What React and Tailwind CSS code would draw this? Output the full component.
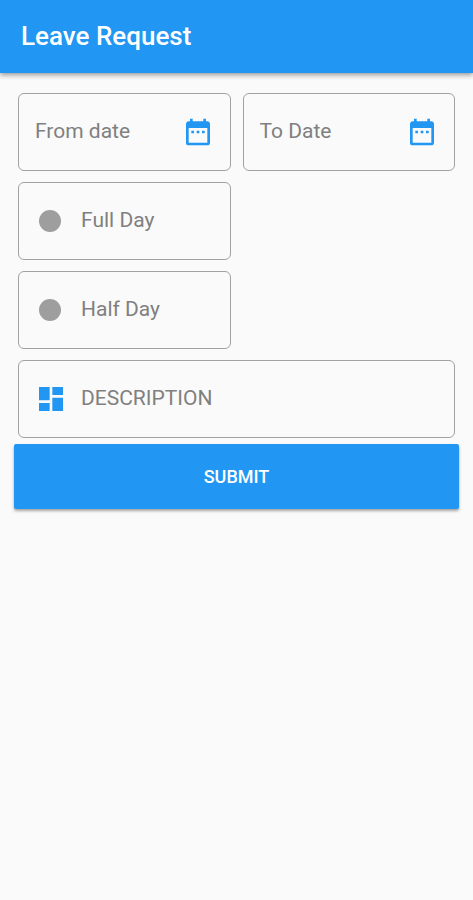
import React, { useState } from 'react';
import { MdDashboard, MdDateRange } from 'react-icons/md';

const boxClass =
  'flex items-center h-[78px] min-w-0 border border-[#a2a2a2] rounded-md focus-within:border-[#2196f3]';

const inputClass =
  'w-full min-w-0 bg-transparent text-[21px] text-[#444444] placeholder:text-[#808080] outline-none';

const DateField = ({ id, label, value, onChange }) => {
  return (
    <div className={`${boxClass} px-4`}>
      <input
        id={id}
        type="text"
        aria-label={label}
        placeholder={label}
        value={value}
        onChange={(e) => onChange(e.target.value)}
        className={inputClass}
      />
      <button type="button" aria-label={`Pick ${label}`} className="shrink-0 text-[#2196f3]">
        <MdDateRange size={32} />
      </button>
    </div>
  );
};

const DayOption = ({ id, label, checked, onChange }) => {
  return (
    <label htmlFor={id} className={`${boxClass} pl-5 cursor-pointer`}>
      <input
        id={id}
        type="radio"
        name="duration"
        checked={checked}
        onChange={onChange}
        className="appearance-none shrink-0 size-[22px] rounded-full bg-[#9e9e9e] checked:bg-[#2196f3]"
      />
      <span className="ml-5 text-[21px] text-[#808080]">{label}</span>
    </label>
  );
};

const LeaveRequest = () => {
  const [fromDate, setFromDate] = useState('');
  const [toDate, setToDate] = useState('');
  const [duration, setDuration] = useState('');
  const [description, setDescription] = useState('');

  return (
    <div className="min-h-screen bg-[#fafafa] font-['Roboto',sans-serif]">
      <header className="flex items-center h-[73px] px-[21px] bg-[#2196f3] shadow-[0_2px_5px_rgba(0,0,0,0.4)]">
        <h1 className="text-[26px] font-medium text-white">Leave Request</h1>
      </header>

      <form className="px-[14px] pt-5" onSubmit={(e) => e.preventDefault()}>
        <div className="grid grid-cols-2 gap-x-3 gap-y-[11px] px-1">
          <DateField id="from-date" label="From date" value={fromDate} onChange={setFromDate} />
          <DateField id="to-date" label="To Date" value={toDate} onChange={setToDate} />

          <div className="col-span-2 grid grid-cols-2 gap-x-3">
            <div className="grid gap-[11px]">
              <DayOption
                id="full-day"
                label="Full Day"
                checked={duration === 'full'}
                onChange={() => setDuration('full')}
              />
              <DayOption
                id="half-day"
                label="Half Day"
                checked={duration === 'half'}
                onChange={() => setDuration('half')}
              />
            </div>
          </div>

          <div className={`${boxClass} col-span-2 px-4`}>
            <MdDashboard size={32} className="shrink-0 text-[#2196f3]" />
            <input
              id="description"
              type="text"
              aria-label="Description"
              placeholder="DESCRIPTION"
              value={description}
              onChange={(e) => setDescription(e.target.value)}
              className={`${inputClass} ml-[14px]`}
            />
          </div>
        </div>

        <button
          type="submit"
          className="mt-[6px] w-full h-[65px] rounded-xs bg-[#2196f3] text-lg font-medium text-white shadow-[0_2px_3px_rgba(0,0,0,0.35)]"
        >
          SUBMIT
        </button>
      </form>
    </div>
  );
};

export default LeaveRequest;
